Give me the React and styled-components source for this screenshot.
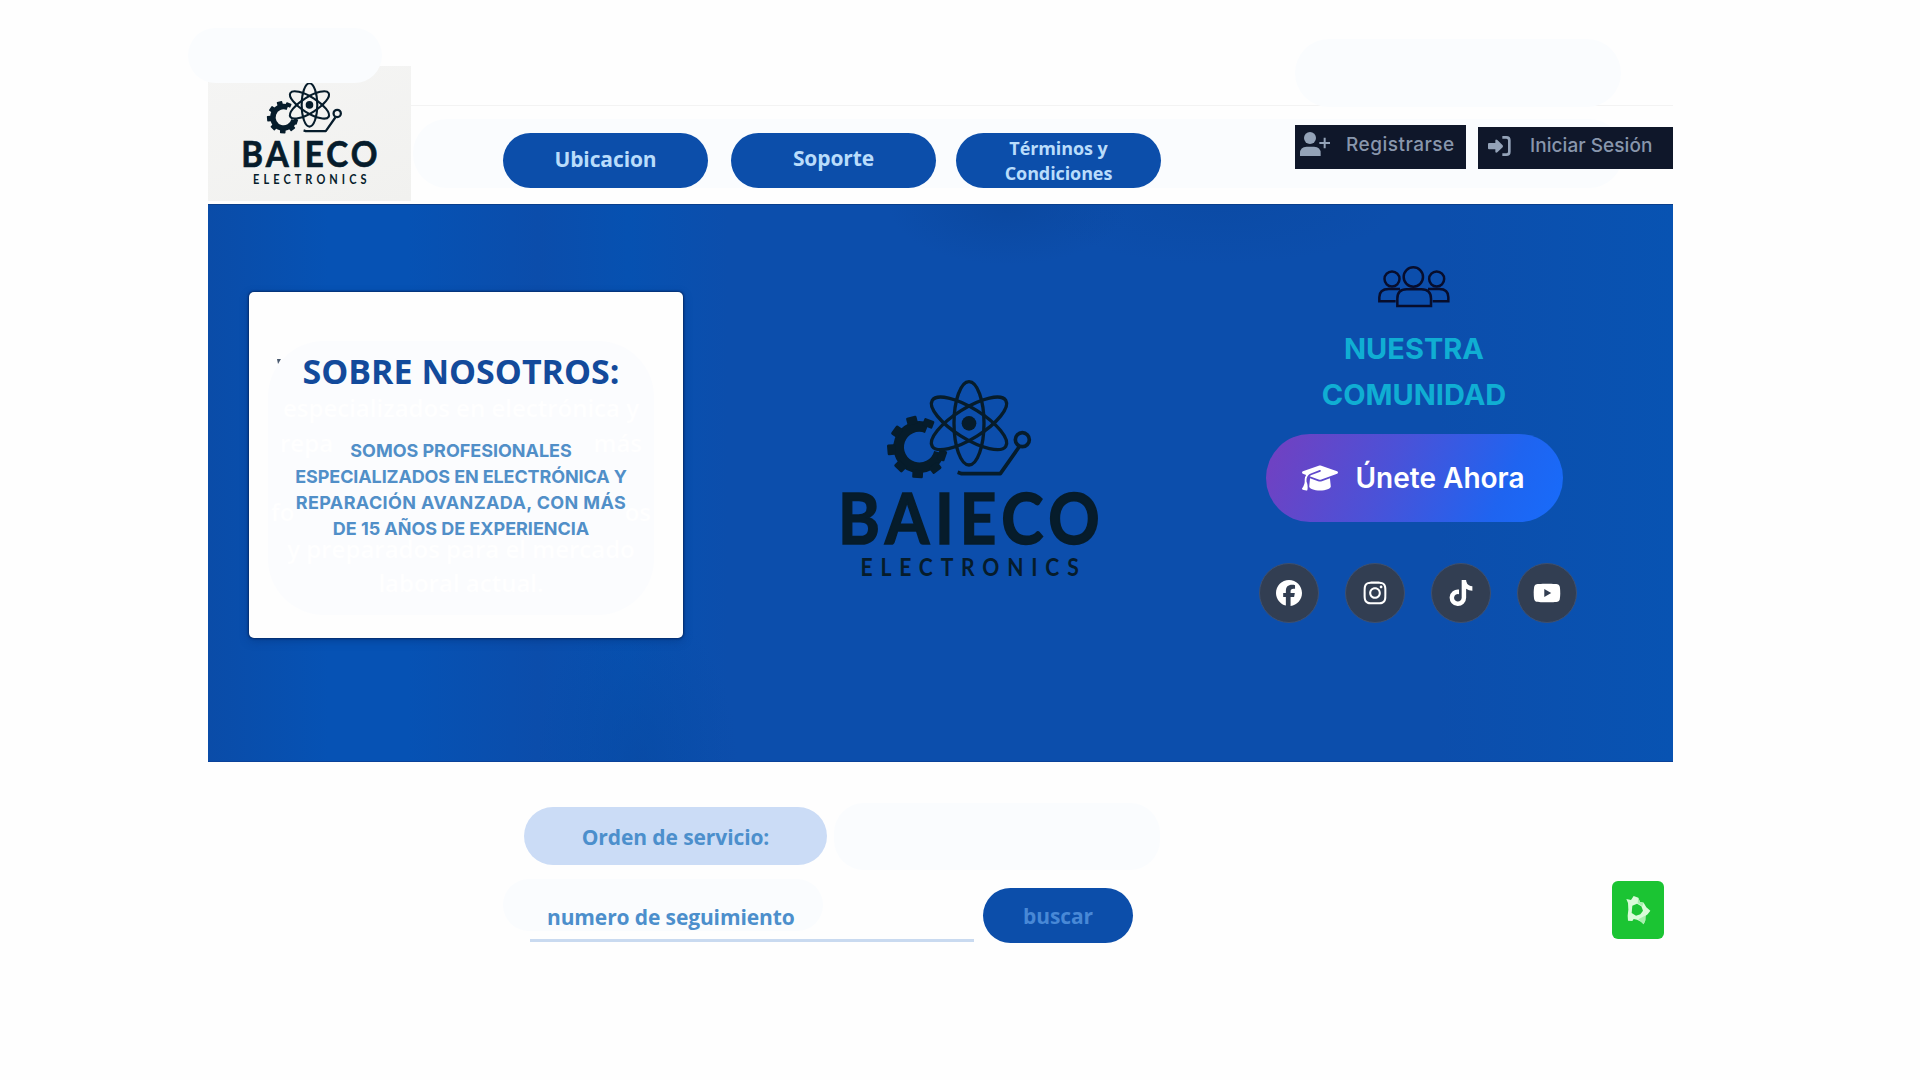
import React from "react";
import styled, { createGlobalStyle } from "styled-components";
import { FaFacebook, FaInstagram, FaTiktok, FaYoutube, FaGraduationCap } from "react-icons/fa6";

const Global = createGlobalStyle`
  * { box-sizing: border-box; }
  html, body { margin: 0; padding: 0; background: #fefefe; }
  body { font-family: "Open Sans", "Noto Sans", sans-serif; }
  button { border: 0; padding: 0; font: inherit; cursor: pointer; }
  p, h1, h2 { margin: 0; }
`;

const Page = styled.div`
  position: relative;
  width: 1920px;
  height: 1080px;
  padding: 66px 247px 0 208px;
  overflow: hidden;
  background: #fefefe;
`;

const Haze = styled.div`
  position: absolute;
  left: ${(p) => p.$x}px;
  top: ${(p) => p.$y}px;
  width: ${(p) => p.$w}px;
  height: ${(p) => p.$h}px;
  border-radius: ${(p) => p.$r || 30}px;
  background: #fafcfe;
`;

const Header = styled.header`
  display: flex;
  align-items: flex-start;
  height: 138px;
`;

const Brand = styled.div`
  width: 203px;
  height: 135px;
  padding: 6px 0 0 24px;
  background: linear-gradient(160deg, #f5f5f4, #f1f1ef);
`;

const Bar = styled.div`
  position: relative;
  flex: 1;
  display: flex;
  height: 135px;
  margin-top: 39px;
  border-top: 1px solid #f3f3f3;
`;

const Nav = styled.nav`
  position: relative;
  display: flex;
  padding: 27px 0 0 92px;
`;

const Pill = styled.button`
  display: flex;
  align-items: center;
  justify-content: center;
  width: ${(p) => p.$w || 205}px;
  height: 55px;
  margin-right: ${(p) => p.$gap || 0}px;
  padding-top: ${(p) => p.$drop || 0}px;
  padding-bottom: ${(p) => p.$lift || 0}px;
  border-radius: 28px;
  background: #0c4eaa;
  color: ${(p) => p.$color || "#b9dcfb"};
  font-size: ${(p) => p.$size || 21}px;
  line-height: 25px;
  font-weight: 700;
  letter-spacing: -0.1px;
  text-align: center;
`;

const Auth = styled.div`
  position: relative;
  display: flex;
  align-items: flex-end;
  gap: 12px;
  height: 63px;
  margin-left: auto;
`;

const AuthButton = styled.button`
  display: flex;
  align-items: center;
  width: ${(p) => p.$w}px;
  height: ${(p) => p.$h}px;
  padding-left: ${(p) => p.$pad}px;
  gap: ${(p) => p.$gap}px;
  background: #0f172a;
  color: #8896ac;
  font: 500 19px Inter, sans-serif;
  letter-spacing: ${(p) => p.$track}px;
  padding-bottom: ${(p) => p.$lift || 0}px;
  white-space: nowrap;
`;

const Hero = styled.main`
  display: flex;
  width: 1465px;
  height: 558px;
  border-top: 1px solid #0a3f8c;
  border-bottom: 1px solid #0a429a;
  background:
    radial-gradient(ellipse 120px 60px at 800px 0, rgba(10, 68, 152, 0.6), transparent),
    radial-gradient(ellipse 180px 60px at 1010px 0, rgba(10, 70, 156, 0.4), transparent),
    radial-gradient(ellipse 100px 160px at 430px 558px, rgba(10, 72, 160, 0.6), transparent),
    linear-gradient(90deg, #0a4ca8 0, #0652b4 120px, #0652b4 200px, #0b4dab 330px, #0651b1 420px, #0c4eac 520px, #0c4eac 1230px, #0853b2 1465px);
`;

const Card = styled.section`
  width: 434px;
  height: 346px;
  margin: 87px 0 0 41px;
  padding: 49px 29px 0 19px;
  border-radius: 5px;
  background: #fefefe;
  box-shadow: 0 0 2px 1px rgba(3, 32, 84, 0.7), 0 3px 10px rgba(5, 45, 110, 0.4);
`;

const CardInner = styled.div`
  position: relative;
  height: 274px;
  border-radius: 56px;
  background: #fbfcfe;
  text-align: center;
`;

const Tick = styled.i`
  position: absolute;
  left: 9px;
  top: 18px;
  width: 4px;
  height: 5px;
  background: #4b5b70;
  clip-path: polygon(0 0, 100% 0, 25% 100%);
`;

const Ghost = styled.div`
  position: absolute;
  left: ${(p) => p.$inset}px;
  right: ${(p) => p.$inset}px;
  top: ${(p) => p.$y}px;
  display: flex;
  justify-content: ${(p) => (p.$split ? "space-between" : "center")};
  color: #fff;
  font: 600 24px/26px "Open Sans", sans-serif;
  white-space: nowrap;
`;

const Title = styled.h1`
  position: relative;
  padding-top: 6px;
  color: #134a9b;
  font-size: 34px;
  line-height: 48px;
  font-weight: 700;
  white-space: nowrap;
`;

const Lead = styled.p`
  position: relative;
  margin-top: 43px;
  color: #518fc8;
  font: 700 18px/26px Inter, sans-serif;
`;

const LeadLine = styled.span`
  display: block;
  white-space: nowrap;
  letter-spacing: ${(p) => p.$track}px;
`;

const Center = styled.div`
  width: 300px;
  margin: 155px 0 0 137px;
`;

const Community = styled.section`
  display: flex;
  flex-direction: column;
  align-items: center;
  width: 330px;
  margin: 61px 0 0 129px;
`;

const CommunityTitle = styled.h2`
  margin-top: 18px;
  color: #10aed3;
  font: 700 29px/45.5px Inter, sans-serif;
  text-align: center;
  span { display: block; }
`;

const Join = styled.button`
  display: flex;
  align-items: center;
  width: 297px;
  height: 88px;
  margin-top: 17px;
  padding-left: 36px;
  gap: 18px;
  border-radius: 44px;
  background: linear-gradient(115deg, #6e42c3 6%, #4a52d8 42%, #1f64f0 78%, #176cfb);
  color: #fff;
  font: 600 28px Inter, sans-serif;
  white-space: nowrap;
`;

const Socials = styled.div`
  display: flex;
  gap: 26px;
  margin: 41px 0 0 7px;
`;

const Social = styled.a`
  display: flex;
  align-items: center;
  justify-content: center;
  width: 60px;
  height: 60px;
  border: 1px solid #3e5070;
  border-radius: 50%;
  background: #323e52;
  color: #fff;
`;

const Tracking = styled.section`
  position: relative;
  display: flex;
  padding: 45px 9px 0 295px;
  width: 1465px;
`;

const Form = styled.div`
  position: relative;
  display: flex;
  flex-direction: column;
`;

const OrderLabel = styled.div`
  display: flex;
  align-items: center;
  justify-content: center;
  width: 303px;
  height: 58px;
  margin-left: 21px;
  border-radius: 29px;
  background: #cbdcf6;
  color: #4c8fcc;
  font-weight: 700;
  font-size: 21px;
  letter-spacing: -0.1px;
  padding-top: 1px;
`;

const SearchRow = styled.div`
  display: flex;
  align-items: flex-start;
  margin: 23px 0 0 27px;
`;

const Field = styled.div`
  width: 444px;
  height: 54px;
  margin-right: 9px;
  padding: 14px 0 0 17px;
  border-bottom: 3px solid #c9daf0;
  color: #4c8fcc;
  font-weight: 700;
  font-size: 21px;
  line-height: 31px;
  letter-spacing: -0.12px;
`;

const Chat = styled.button`
  display: flex;
  align-items: center;
  justify-content: center;
  width: 52px;
  height: 58px;
  margin: 74px 0 0 auto;
  border-radius: 6px;
  background: #1bc433;
`;

const INK = "#061c2b";

const teeth = [
  [325, 190], [276, 182], [231, 215], [214, 269], [241, 319], [293, 342], [346, 324], [366, 286],
];

function Logo({ width, line = 10, weight = 5 }) {
  return (
    <svg width={width} height={width * 0.8} viewBox="0 0 900 720" fill="none" stroke={INK} style={{ display: "block" }}>
      <path d="M321 204A62 62 0 1 0 358 277" strokeWidth="32" />
      {teeth.map(([x, y]) => (
        <rect key={x} x={x - 12} y={y - 16} width="24" height="32" rx="4" fill={INK} stroke="none"
          transform={`rotate(${(Math.atan2(y - 262, x - 297) * 180) / Math.PI} ${x} ${y})`} />
      ))}
      <g strokeWidth={line}>
        <ellipse cx="447" cy="190" rx="45" ry="125" />
        <ellipse cx="447" cy="190" rx="45" ry="130" transform="rotate(58 447 190)" />
        <ellipse cx="447" cy="190" rx="45" ry="130" transform="rotate(-58 447 190)" />
      </g>
      <circle cx="447" cy="190" r="22" fill={INK} stroke="none" />
      <path d="M413 337L425 341H541L597 261" strokeWidth={line + 1} strokeLinejoin="round" />
      <circle cx="607" cy="239" r="21" strokeWidth={line + 1} />
      <text x="60" y="551" transform="scale(0.9 1)" textLength="872" fontFamily="Lato, sans-serif" fontWeight="700" fontSize="212"
        fill={INK} strokeWidth={weight}>BAIECO</text>
      <text x="138" y="647" transform="scale(0.88 1)" textLength="744" fontFamily="Lato, sans-serif" fontWeight="700" fontSize="72"
        fill={INK} stroke="none">ELECTRONICS</text>
    </svg>
  );
}

function PeopleIcon() {
  return (
    <svg width="72" height="42" viewBox="0 0 216 126" fill="none" stroke="#070d2c" strokeWidth="7.5" style={{ display: "block" }}>
      <circle cx="106" cy="33" r="29" />
      <circle cx="42" cy="39" r="22.5" />
      <circle cx="176" cy="39" r="22.5" />
      <path d="M58 120V98Q58 70 86 70H130Q159 70 159 98V120Z" />
      <path d="M66 69H32Q4 69 4 94V106H53M150 69H184Q211 69 211 94V106H164" />
    </svg>
  );
}

function UserPlus() {
  return (
    <svg width="30" height="25" viewBox="0 0 90 75" fill="#94a3b8" style={{ display: "block" }}>
      <circle cx="30" cy="18" r="18" />
      <path d="M0 72V64Q0 44 20 44H42Q62 44 62 64V72Z" />
      <path d="M58 33H90M74 17V49" stroke="#94a3b8" strokeWidth="6" />
    </svg>
  );
}

function LoginIcon() {
  return (
    <svg width="23" height="20" viewBox="0 0 69 60" fill="#94a3b8" style={{ display: "block" }}>
      <path d="M3 21H22V13Q23 8 28 12L44 28Q46 31 44 34L28 49Q23 52 22 47V40H3Q0 40 0 37V24Q0 21 3 21Z" />
      <path d="M43 4H55Q64 4 64 13V47Q64 56 55 56H43" fill="none" stroke="#94a3b8" strokeWidth="8" />
    </svg>
  );
}

function ChatIcon() {
  return (
    <svg width="26" height="30" viewBox="0 0 78 90" style={{ display: "block" }}>
      <path d="M4 12L18 15L26 3L40 8L45 21L56 23L64 37L76 47L68 58L62 62L61 76L56 88L48 80L36 74L26 72L22 78L9 77L8 62L10 44L9 24Z" fill="#d9fbd9" />
      <path d="M40 8L45 21L56 23L52 34L38 24ZM60 62L61 76L56 88L48 80L40 73Z" fill="#a8efae" />
      <path d="M22 32L36 26L49 34L54 47L46 58L33 62L20 54Z" fill="#1bc433" />
    </svg>
  );
}

export default function App() {
  return (
    <>
      <Global />
      <Page>
        <Header>
          <Brand><Logo width={156} line={12} weight={4} /></Brand>
          <Bar>
            <Haze $x={2} $y={13} $w={1210} $h={69} $r={34} />
            <Nav>
              <Pill $gap={23} $lift={2}>Ubicacion</Pill>
              <Pill $gap={20} $lift={4}>Soporte</Pill>
              <Pill $size={18}>Términos y<br />Condiciones</Pill>
            </Nav>
            <Auth>
              <AuthButton $w={171} $h={44} $pad={5} $gap={16} $track={0.5} $lift={5}><UserPlus />Registrarse</AuthButton>
              <AuthButton $w={195} $h={42} $pad={10} $gap={19} $track={0.05} $lift={5}><LoginIcon />Iniciar Sesión</AuthButton>
            </Auth>
          </Bar>
        </Header>
        <Hero>
          <Card>
            <CardInner>
              <Tick />
              <Ghost $y={54} $inset={0}>especializados en electrónica y</Ghost>
              <Ghost $y={89} $inset={12} $split><span>repa</span><span>más</span></Ghost>
              <Ghost $y={158} $inset={3} $split><span>fo</span><span>os</span></Ghost>
              <Ghost $y={195} $inset={0}>y preparados para el mercado</Ghost>
              <Ghost $y={229} $inset={0}>laboral actual.</Ghost>
              <Title>SOBRE NOSOTROS:</Title>
              <Lead>
                <LeadLine $track={-0.03}>SOMOS PROFESIONALES</LeadLine>
                <LeadLine $track={-0.12}>ESPECIALIZADOS EN ELECTRÓNICA Y</LeadLine>
                <LeadLine $track={0.37}>REPARACIÓN AVANZADA, CON MÁS</LeadLine>
                <LeadLine $track={-0.03}>DE 15 AÑOS DE EXPERIENCIA</LeadLine>
              </Lead>
            </CardInner>
          </Card>
          <Center><Logo width={300} /></Center>
          <Community>
            <PeopleIcon />
            <CommunityTitle><span>NUESTRA</span><span>COMUNIDAD</span></CommunityTitle>
            <Join><FaGraduationCap size={36} />Únete Ahora</Join>
            <Socials>
              <Social><FaFacebook size={26} /></Social>
              <Social><FaInstagram size={26} /></Social>
              <Social><FaTiktok size={26} /></Social>
              <Social><FaYoutube size={28} /></Social>
            </Socials>
          </Community>
        </Hero>
        <Tracking>
          <Haze $x={626} $y={41} $w={326} $h={67} />
          <Haze $x={295} $y={117} $w={320} $h={52} $r={26} />
          <Form>
            <OrderLabel>Orden de servicio:</OrderLabel>
            <SearchRow>
              <Field>numero de seguimiento</Field>
              <Pill $w={150} $drop={2} $color="#4888d6">buscar</Pill>
            </SearchRow>
          </Form>
          <Chat><ChatIcon /></Chat>
        </Tracking>
        <Haze $x={188} $y={28} $w={194} $h={55} />
        <Haze $x={1295} $y={39} $w={326} $h={68} $r={34} />
      </Page>
    </>
  );
}
